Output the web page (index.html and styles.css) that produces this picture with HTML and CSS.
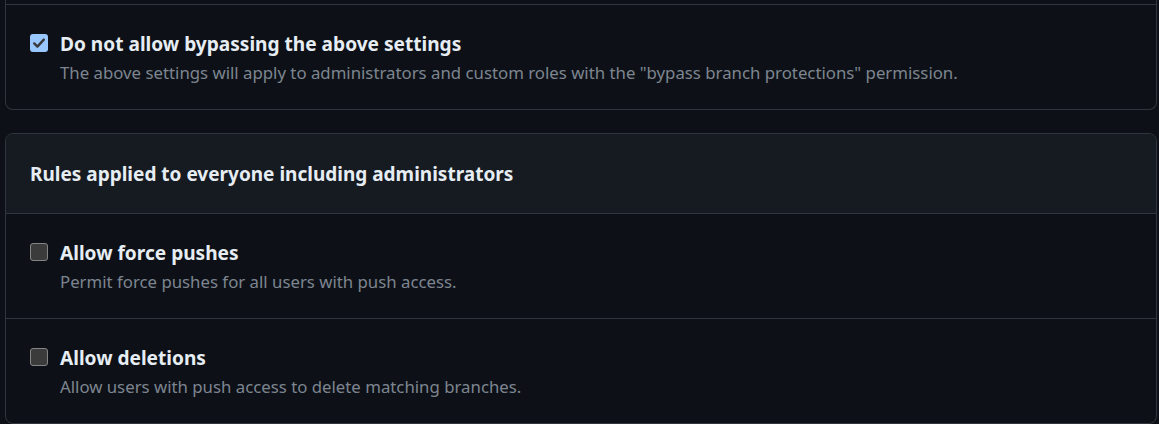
FILE: index.html
```html
<!DOCTYPE html>
<html lang="en">
<head>
<meta charset="utf-8">
<title>Branch protection</title>
<link rel="stylesheet" href="styles.css">
</head>
<body>
<div class="page">
  <section class="box box--cut">
    <div class="row row--divided">
      <span class="check check--on">
        <svg viewBox="0 0 18 18" width="18" height="18"><path d="M4.2 9.4 L7.4 12.6 L13.8 5.6" fill="none" stroke="#3a3a3a" stroke-width="2.4" stroke-linecap="round" stroke-linejoin="round"/></svg>
      </span>
      <div class="text">
        <div class="title">Do not allow bypassing the above settings</div>
        <div class="desc">The above settings will apply to administrators and custom roles with the "bypass branch protections" permission.</div>
      </div>
    </div>
  </section>

  <section class="box box--gap">
    <header class="box-header">Rules applied to everyone including administrators</header>
    <div class="row">
      <span class="check"></span>
      <div class="text">
        <div class="title">Allow force pushes</div>
        <div class="desc">Permit force pushes for all users with push access.</div>
      </div>
    </div>
    <div class="row row--divided">
      <span class="check"></span>
      <div class="text">
        <div class="title">Allow deletions</div>
        <div class="desc">Allow users with push access to delete matching branches.</div>
      </div>
    </div>
  </section>
</div>
</body>
</html>
```

FILE: styles.css
```css
html, body {
  margin: 0;
  padding: 0;
  background: #0d1117;
  height: 100%;
  overflow: hidden;
}
body {
  font-family: "Noto Sans", "Open Sans", sans-serif;
  color: #e6edf3;
}
.page {
  padding: 0 2px 0 5px;
}
.box {
  border: 1px solid #30363d;
  border-radius: 8px;
  background: #0d1117;
}
.box--cut {
  border-top: none;
  border-top-left-radius: 0;
  border-top-right-radius: 0;
  padding-top: 4px;
}
.box--gap {
  margin-top: 23px;
}
.box-header {
  background: #161b22;
  border-bottom: 1px solid #30363d;
  border-radius: 8px 8px 0 0;
  padding: 26px 24px 24px;
  line-height: 29px;
  font-size: 19px;
  font-weight: 700;
}
.row {
  display: flex;
  align-items: flex-start;
  gap: 12px;
  padding: 24px 24px 24px;
}
.row--divided {
  border-top: 1px solid #30363d;
}
.check {
  flex: 0 0 auto;
  width: 18px;
  height: 18px;
  box-sizing: border-box;
  margin-top: 5px;
  border-radius: 3px;
  background: #3b3b3b;
  border: 1.5px solid #858585;
}
.check--on {
  background: #99c8ff;
  border: none;
}
.check svg {
  display: block;
}
.title {
  font-size: 19.1px;
  font-weight: 700;
  line-height: 30px;
}
.desc {
  margin-top: 2px;
  font-size: 16.8px;
  line-height: 24px;
  color: #7d8590;
}
```
